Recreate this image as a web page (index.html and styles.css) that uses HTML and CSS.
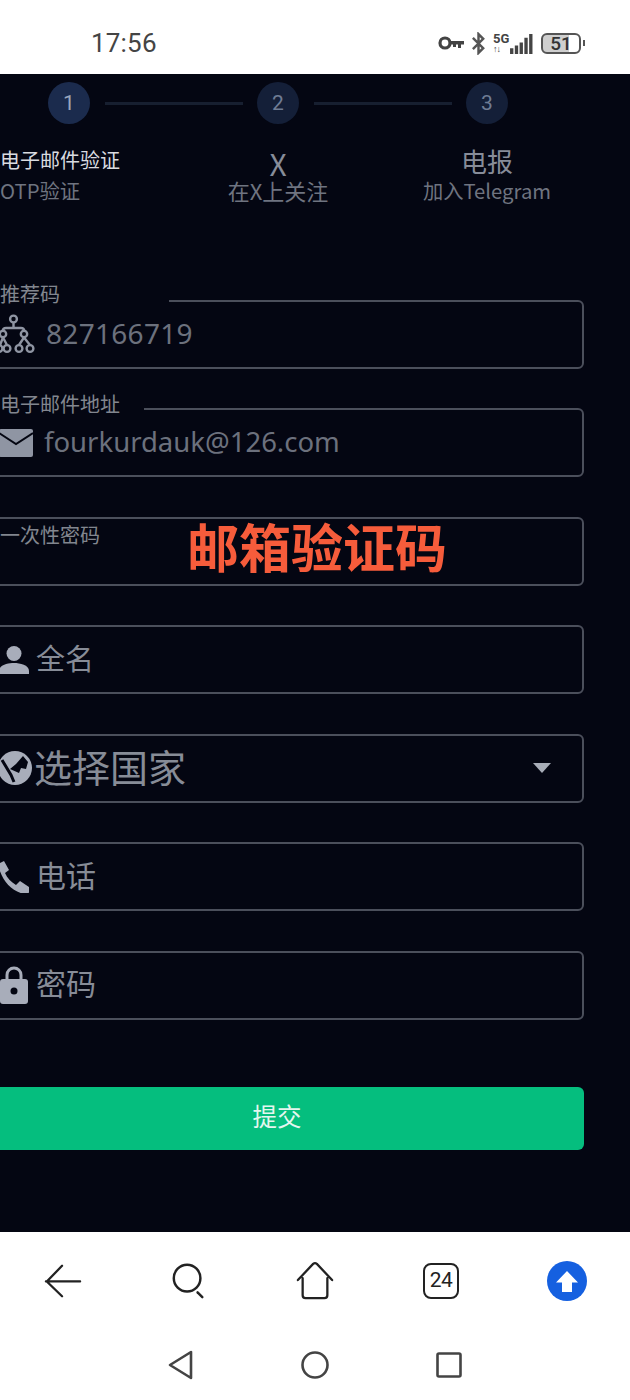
FILE: index.html
```html
<!DOCTYPE html>
<html lang="zh-CN">
<head>
    <meta charset="UTF-8">
    <meta name="viewport" content="width=device-width, initial-scale=1.0">
    <title>电子邮件验证</title>
    <link rel="stylesheet" href="styles.css">
</head>
<body>
    <div class="status-bar">
        <span class="clock">17:56</span>
        <div class="status-icons">
            <svg class="ic-key" viewBox="0 0 26 16"><circle cx="7" cy="8" r="5" fill="none" stroke="#444" stroke-width="3.200"/><path d="M12 6h14v3.500h-3V13h-3V9.500h-2V12h-3V9.500h-3z" fill="#444"/></svg>
            <svg class="ic-bt" viewBox="0 0 16 24"><path d="M2 6l11 11-5 5V2l5 5L2 18" fill="none" stroke="#555" stroke-width="2.600"/></svg>
            <div class="net">
                <span class="net-5g">5G</span>
                <span class="net-arrows">↑↓</span>
            </div>
            <svg class="ic-bars" viewBox="0 0 24 22"><path d="M0 15h3.500v6H0zM5 12h3.500v9H5zM10 9h3.500v12H10zM15 4h3.500v17H15zM20 0h3.500v21H20z" fill="#444"/></svg>
            <div class="battery">51</div>
            <span class="battery-tip"></span>
        </div>
    </div>

    <main class="page">
        <div class="stepper">
            <div class="step">
                <span class="dot dot-on">1</span>
                <span class="title title-on">电子邮件验证</span>
                <span class="sub">OTP验证</span>
            </div>
            <div class="step">
                <span class="dot">2</span>
                <span class="title title-x">X</span>
                <span class="sub sub-wide">在X上关注</span>
            </div>
            <div class="step">
                <span class="dot">3</span>
                <span class="title">电报</span>
                <span class="sub">加入Telegram</span>
            </div>
        </div>

        <form class="form">
            <div class="field field-wide">
                <label class="label label-ref">推荐码</label>
                <svg class="icon ic-tree" viewBox="0 0 36 40"><g fill="none" stroke="#8f95a3" stroke-width="2.400"><circle cx="14.500" cy="5" r="3.400"/><path d="M14.500 8.500V14M4 17v-.5q0-2.500 3-2.500h15q3 0 3 2.500v.5M4 23.500L1 31M4 23.500L8 31M25 23.500L20 31M25 23.500L31 31"/><circle cx="4" cy="20" r="3.200"/><circle cx="25" cy="20" r="3.200"/><circle cx="0" cy="34.500" r="3.400"/><circle cx="8" cy="34.500" r="3.400"/><circle cx="20" cy="34.500" r="3.400"/><circle cx="31" cy="34.500" r="3.400"/></g></svg>
                <span class="value value-num">827166719</span>
            </div>
            <div class="field field-wide">
                <label class="label label-mail">电子邮件地址</label>
                <svg class="icon ic-mail" viewBox="0 0 34 28"><rect width="34" height="28" rx="2" fill="#8f95a3"/><path d="M0 4l17 11L34 4" fill="none" stroke="#040612" stroke-width="2"/></svg>
                <span class="value">fourkurdauk@126.com</span>
            </div>
            <div class="field">
                <label class="label label-otp">一次性密码</label>
            </div>
            <div class="field">
                <svg class="icon ic-user" viewBox="0 0 30 28"><circle cx="15" cy="7.500" r="7.500" fill="#a8adba"/><path d="M0 28v-3c0-6 9-8 15-8s15 2 15 8v3z" fill="#a8adba"/></svg>
                <span class="hint hint-name">全名</span>
            </div>
            <div class="field">
                <svg class="icon ic-globe" viewBox="0 0 34 34"><circle cx="17" cy="17" r="17" fill="#a8adba"/><path d="M4 9l9 15 3 7" fill="none" stroke="#040612" stroke-width="3"/><path d="M18 13l7-8 5 6-2 7-5-1-2 5-9-4z" fill="#040612"/></svg>
                <span class="hint hint-big">选择国家</span>
                <span class="caret"></span>
            </div>
            <div class="field">
                <svg class="icon ic-phone" viewBox="0 0 32 32"><path d="M0 3l6-3 5 9-4 3c2 5 6 9 11 12l4-4 9 6v5c0 1-1 2-3 2C14 32 3 19 0 3z" fill="#a8adba"/></svg>
                <span class="hint hint-mid hint-tel">电话</span>
            </div>
            <div class="field">
                <svg class="icon ic-lock" viewBox="0 0 28 38"><path d="M7 14V9a7 7 0 0 1 14 0v5" fill="none" stroke="#a8adba" stroke-width="3"/><rect y="13" width="28" height="25" rx="3" fill="#a8adba"/><circle cx="14" cy="25" r="3.500" fill="#040612"/></svg>
                <span class="hint hint-mid">密码</span>
            </div>
            <button class="submit" type="button">提交</button>
        </form>

        <div class="stamp">邮箱验证码</div>
    </main>

    <div class="bottom">
        <div class="browser-bar">
            <svg class="nav-icon" viewBox="0 0 40 40"><path d="M38 20.500H2M19 4L3 20.500 19 36" fill="none" stroke="#222" stroke-width="2.400" stroke-linecap="round"/></svg>
            <svg class="nav-icon" viewBox="0 0 40 40"><circle cx="18" cy="17" r="14" fill="none" stroke="#222" stroke-width="2.600"/><path d="M29 32l5 5" stroke="#222" stroke-width="2.600" stroke-linecap="round"/></svg>
            <svg class="nav-icon" viewBox="0 0 40 40"><path d="M2 19L18 2q2-1.500 4 0l16 17M7 17v18q0 3 3 3h20q3 0 3-3V17" fill="none" stroke="#222" stroke-width="2.400" stroke-linecap="round"/></svg>
            <div class="tabs">24</div>
            <svg class="nav-icon upload" viewBox="0 0 40 40"><circle cx="20" cy="20" r="20" fill="#1560e0"/><path d="M20 10l11 11.500h-6V31H15v-9.500H9z" fill="#fff"/></svg>
        </div>
        <div class="system-bar">
            <svg class="sys-icon" viewBox="0 0 28 30"><path d="M24 2v26L3 15z" fill="none" stroke="#444" stroke-width="2.600" stroke-linejoin="round"/></svg>
            <svg class="sys-icon" viewBox="0 0 28 30"><circle cx="14" cy="15" r="12.500" fill="none" stroke="#444" stroke-width="2.600"/></svg>
            <svg class="sys-icon" viewBox="0 0 28 30"><rect x="2.500" y="3.500" width="23" height="23" rx="1.500" fill="none" stroke="#444" stroke-width="2.600"/></svg>
        </div>
    </div>
</body>
</html>
```

FILE: styles.css
```css
* {
    margin: 0;
    padding: 0;
    box-sizing: border-box;
}

html, body {
    width: 630px;
    height: 1400px;
    overflow: hidden;
}

body {
    font-family: 'Noto Sans CJK SC', 'Noto Sans', sans-serif;
    background: #fff;
}

.status-bar {
    height: 74px;
    background: #fff;
    display: flex;
    align-items: center;
    padding: 12px 45px 0 91px;
    color: #444;
}

.clock {
    font-family: Roboto, sans-serif;
    font-size: 26px;
    letter-spacing: 0.2px;
}

.status-icons {
    margin-left: auto;
    display: flex;
    align-items: center;
}

.ic-key {
    width: 26px;
    height: 16px;
    margin-right: 7px;
}

.ic-bt {
    width: 15px;
    height: 23px;
    margin-right: 7px;
}

.net {
    display: flex;
    flex-direction: column;
    width: 17px;
    color: #444;
    font-family: Roboto, sans-serif;
    font-weight: 700;
    line-height: 1;
}

.net-5g {
    font-size: 13px;
}

.net-arrows {
    font-size: 9px;
    letter-spacing: -1px;
}

.ic-bars {
    width: 23px;
    height: 21px;
    margin: 0 8px 0 0;
    align-self: flex-end;
}

.battery {
    width: 40px;
    height: 21px;
    border: 2px solid #555;
    border-radius: 6px;
    background: linear-gradient(90deg, #cfcfcf 72%, transparent 72%);
    font-family: Roboto, sans-serif;
    font-size: 19px;
    font-weight: 500;
    line-height: 17px;
    text-align: center;
    color: #333;
}

.battery-tip {
    width: 2px;
    height: 6px;
    margin-left: 2px;
    background: #555;
}

.page {
    position: relative;
    height: 1158px;
    background: #040612;
    padding-top: 8px;
    overflow: hidden;
}

.stepper {
    display: grid;
    grid-template-columns: repeat(3, 209px);
    margin-left: -35.5px;
    width: 627px;
}

.step {
    position: relative;
    display: flex;
    flex-direction: column;
    align-items: center;
    height: 217.5px;
}

/* connecting line between two circles */
.step:not(:last-child)::after {
    content: '';
    position: absolute;
    top: 20px;
    left: 140px;
    width: 138px;
    height: 3px;
    background: #171f30;
}

.dot {
    width: 42px;
    height: 42px;
    border-radius: 50%;
    background: #141f38;
    color: #6f7c94;
    font-family: Roboto, sans-serif;
    font-size: 21px;
    line-height: 42px;
    text-align: center;
    margin-bottom: 20px;
}

.dot-on {
    background: #1b2b4d;
    color: #9aa6bb;
}

.title {
    height: 30px;
    margin: 2px 0 4px;
    font-size: 26px;
    line-height: 30px;
    color: #878c99;
}

.title-x {
    margin: 4px 0 2px;
    font-size: 30px;
}

.title-on {
    height: 32px;
    margin: 0 0 4px;
    font-size: 20px;
    line-height: 32px;
    color: #d9dbe0;
}

.sub {
    font-size: 20.3px;
    line-height: 20px;
    color: #6f7480;
}

.sub-wide {
    font-size: 22px;
}

.title-on,
.step:first-child .sub {
    align-self: flex-start;
    margin-left: 35.5px;
}

.form {
    display: flex;
    flex-direction: column;
    gap: 39.5px;
    width: 614px;
    margin-left: -30px;
}

.field {
    position: relative;
    display: flex;
    align-items: center;
    gap: 8px;
    height: 69px;
    padding-left: 27px;
    border: 2px solid #4b4f5b;
    border-radius: 6px;
}

.field-wide {
    gap: 11px;
}

.label {
    position: absolute;
    left: 28px;
    font-size: 20px;
    line-height: 28px;
    color: #82868f;
    background: #040612;
}

.label-ref {
    top: -22px;
    padding-right: 109px;
}

.label-mail {
    top: -20px;
    padding-right: 24px;
}

.label-otp {
    top: 2px;
    background: none;
}

.icon {
    flex: none;
}

.ic-tree {
    width: 36px;
    height: 40px;
}

.ic-mail {
    width: 34px;
    height: 28px;
}

.ic-user {
    width: 30px;
    height: 28px;
}

.ic-globe {
    width: 34px;
    height: 34px;
    margin-left: -1px;
}

.ic-phone {
    width: 32px;
    height: 32px;
    margin-left: -1px;
}

.ic-lock {
    width: 28px;
    height: 38px;
    margin-left: 1px;
}

.value {
    font-family: 'Noto Sans', sans-serif;
    font-size: 27.5px;
    margin-bottom: 3px;
    color: #6c717d;
}

.value-num {
    font-size: 28px;
    letter-spacing: 0.3px;
}

.hint {
    font-size: 29px;
    color: #878c97;
    margin-bottom: 6px;
}

.hint-name {
    margin-left: -1px;
}

.hint-mid {
    font-size: 30px;
}

.hint-tel {
    margin-left: -2px;
}

.hint-big {
    font-size: 38px;
    margin-left: -6px;
}

.caret {
    margin-left: auto;
    margin-right: 31px;
    border-left: 9px solid transparent;
    border-right: 9px solid transparent;
    border-top: 10px solid #a8adb8;
}

.submit {
    margin-top: 28px;
    height: 63px;
    padding-bottom: 6px;
    border: none;
    border-radius: 6px;
    background: #05be7e;
    color: #e4f6ef;
    font-family: inherit;
    font-size: 24.5px;
}

.stamp {
    position: absolute;
    top: 436px;
    left: 187px;
    font-size: 52px;
    line-height: 72px;
    font-weight: 700;
    color: #f65c3b;
}

.bottom {
    height: 168px;
    background: #fff;
}

.browser-bar {
    display: grid;
    grid-template-columns: repeat(5, 126px);
    justify-items: center;
    align-items: center;
    height: 98px;
}

.nav-icon {
    width: 38px;
    height: 38px;
}

.upload {
    width: 40px;
    height: 40px;
}

.tabs {
    width: 36px;
    height: 36px;
    border: 2.5px solid #222;
    border-radius: 8px;
    font-family: Roboto, sans-serif;
    font-size: 21px;
    line-height: 31px;
    letter-spacing: -0.5px;
    text-align: center;
    color: #222;
}

.system-bar {
    display: flex;
    justify-content: center;
    align-items: center;
    gap: 106px;
    height: 70px;
}

.sys-icon {
    width: 28px;
    height: 30px;
}
```
